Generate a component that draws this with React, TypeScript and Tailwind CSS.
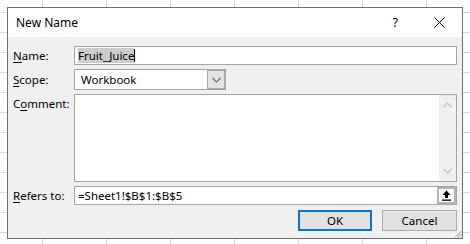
// Access-key letter with underline, as in classic Win32 dialogs
function Key({ children }: { children: string }) {
  return <span className="underline underline-offset-2 decoration-1">{children}</span>;
}

function Chevron({ up = false }: { up?: boolean }) {
  return (
    <svg width="9" height="6" viewBox="0 0 9 6" className={up ? "" : "rotate-180"}>
      <path d="M0.5 5 L4.5 1 L8.5 5" fill="none" stroke="currentColor" strokeWidth="1.2" />
    </svg>
  );
}

export default function App() {
  return (
    <div className="relative w-[470px] h-[244px] overflow-hidden bg-white bg-[linear-gradient(to_right,#d8d8d8_1px,transparent_1px),linear-gradient(to_bottom,#d8d8d8_1px,transparent_1px)] bg-size-[64px_20px] bg-position-[42px_12px] font-['Segoe_UI','Noto_Sans',sans-serif] text-[11.5px] text-black">
      {/* Dialog window */}
      <div className="absolute left-[7px] top-[7px] w-[456px] h-[232px] border border-[#6f6f6f] bg-[#f0f0f0] flex flex-col">
        {/* Title bar */}
        <div className="h-[29px] bg-white flex items-center pl-[8px] shrink-0">
          <span className="text-[12px]">New Name</span>
          <span className="ml-auto mr-[36px] text-[12px]">?</span>
          <svg width="11" height="11" viewBox="0 0 11 11" className="mr-[17px]">
            <path d="M0.5 0.5 L10.5 10.5 M10.5 0.5 L0.5 10.5" stroke="black" strokeWidth="1" />
          </svg>
        </div>

        {/* Body */}
        <div className="relative flex-1 flex flex-col pl-[5px] pr-[5px] pt-[9px]">
          {/* Name */}
          <div className="flex items-center h-[19px]">
            <label className="w-[61px]"><Key>N</Key>ame:</label>
            <div className="flex-1 h-[19px] border border-[#a5a5a5] bg-white flex items-center pl-[3px]">
              <span className="bg-[#cccccc] leading-[15px]">Fruit_Juice</span>
              <span className="w-px h-[13px] bg-black" />
            </div>
          </div>

          {/* Scope */}
          <div className="flex items-center h-[21px] mt-[4px]">
            <label className="w-[61px]"><Key>S</Key>cope:</label>
            <div className="w-[152px] h-[21px] border border-[#a5a5a5] bg-white flex items-center">
              <span className="pl-[6px] flex-1">Workbook</span>
              <div className="w-[18px] h-[19px] bg-[#e3e3e3] border border-[#a8a8a8] flex items-center justify-center text-[#6d6d6d]">
                <Chevron />
              </div>
            </div>
          </div>

          {/* Comment */}
          <div className="flex items-start h-[88px] mt-[4px]">
            <label className="w-[61px] pt-[1px]">C<Key>o</Key>mment:</label>
            <div className="flex-1 h-[88px] border border-[#a5a5a5] bg-white flex">
              <div className="flex-1" />
              <div className="w-[17px] bg-[#f0f0f0] flex flex-col items-center justify-between py-[7px] text-[#c2c2c2]">
                <Chevron up />
                <Chevron />
              </div>
            </div>
          </div>

          {/* Refers to */}
          <div className="flex items-center h-[19px] mt-[4px]">
            <label className="w-[61px]"><Key>R</Key>efers to:</label>
            <div className="flex-1 h-[19px] border border-[#a5a5a5] bg-white flex items-center pl-[3px]">
              <span className="flex-1">=Sheet1!$B$1:$B$5</span>
              <div className="w-[19px] h-[17px] border-2 border-[#b4b4b4] bg-white flex items-center justify-center">
                <svg width="9" height="11" viewBox="0 0 9 11">
                  <path d="M4.5 0.5 L8.5 5 L6 5 L6 8 L3 8 L3 5 L0.5 5 Z" fill="black" />
                  <rect x="0" y="9.5" width="9" height="1.3" fill="black" />
                </svg>
              </div>
            </div>
          </div>

          {/* Buttons */}
          <div className="flex justify-end gap-[10px] mt-[5px]">
            <button className="w-[74px] h-[21px] bg-[#e1e1e1] border-2 border-[#0078d7] flex items-center justify-center">
              OK
            </button>
            <button className="w-[75px] h-[21px] bg-[#e1e1e1] border border-[#adadad] flex items-center justify-center">
              Cancel
            </button>
          </div>

          {/* Resize grip */}
          <svg width="8" height="8" viewBox="0 0 8 8" className="absolute right-0 bottom-0 text-[#9a9a9a]">
            <path d="M7.5 1 L1 7.5 M7.5 4 L4 7.5 M7.5 7 L7 7.5" stroke="currentColor" strokeWidth="1" />
          </svg>
        </div>
      </div>
    </div>
  );
}
